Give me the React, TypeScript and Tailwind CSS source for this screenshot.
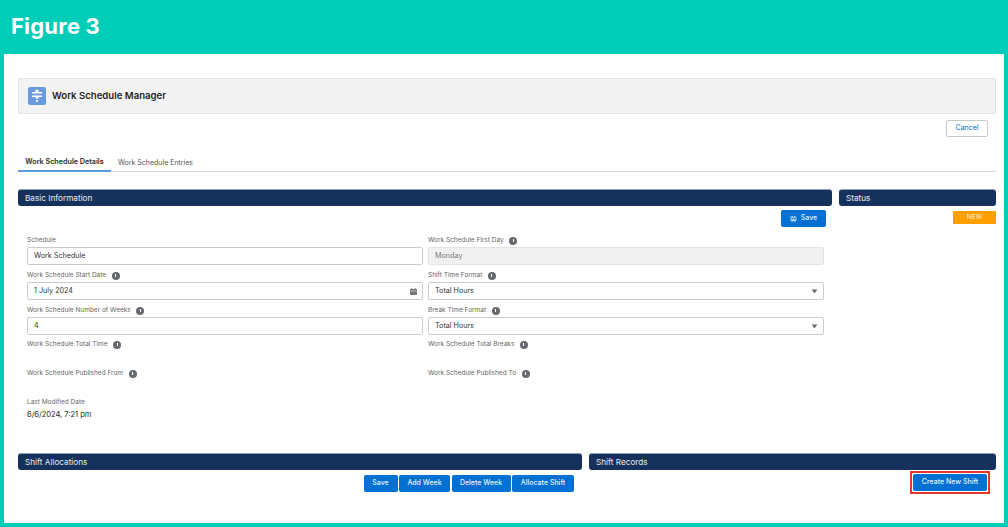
// Figure 3: Work Schedule Manager screen on a teal slide frame
import type { ReactNode } from "react";

function InfoDot() {
  return (
    <span className="ml-[5.5px] inline-flex h-[8px] w-[8px] items-center justify-center rounded-full bg-[#66696e]">
      <span className="h-[3.5px] w-[1px] bg-white" />
    </span>
  );
}

function SectionBar({ title }: { title: string }) {
  return (
    <div className="flex h-[17px] w-full items-center rounded-[3px] border-t border-[#8f9db3] bg-[#16325c] pl-[7px] text-[8.2px] text-[#e6ebf2]">
      {title}
    </div>
  );
}

function Label({ text, info = true }: { text: string; info?: boolean }) {
  return (
    <div className="flex h-[9px] items-center text-[6.5px] leading-[9px] text-[#666666]">
      {text}
      {info && <InfoDot />}
    </div>
  );
}

function Input({ children, right, muted }: { children: ReactNode; right?: ReactNode; muted?: boolean }) {
  return (
    <div
      className={`mt-[2px] flex h-[18px] items-center justify-between rounded-[2px] border pl-[6px] pr-[5px] text-[7.2px] ${
        muted ? "border-[#e3e3e3] bg-[#f1f1f1] text-[#7a7a7a]" : "border-[#cccccc] bg-white text-[#333333]"
      }`}
    >
      <span>{children}</span>
      {right}
    </div>
  );
}

function Caret() {
  return (
    <svg viewBox="0 0 8 6" className="h-[5px] w-[7px] fill-[#706e6b]">
      <path d="M0.5 0.5h7L4 5.5z" />
    </svg>
  );
}

function CalendarIcon() {
  return (
    <svg viewBox="0 0 8 8" className="h-[7px] w-[7px] fill-[#7a7a7a]">
      <path d="M1.5 0h1v1h3V0h1v1H8v2H0V1h1.5zM0 3.6h8V8H0z" />
    </svg>
  );
}

function BlueButton({ children, className = "" }: { children: ReactNode; className?: string }) {
  return (
    <div className={`flex h-[17px] items-center justify-center rounded-[2px] bg-[#0070d2] text-[7px] font-medium text-[#e8f2fb] ${className}`}>
      {children}
    </div>
  );
}

export default function App() {
  return (
    <div className="flex h-[527px] w-[1008px] flex-col overflow-hidden bg-[#00cdb8] font-['Inter',sans-serif]">
      <div className="flex h-[54px] shrink-0 items-center pb-[2px] pl-[11px] text-[22px] font-bold tracking-[0.2px] text-white">
        Figure 3
      </div>

      <div className="mx-[4px] mb-[4px] flex-1 bg-white pl-[14px] pr-[8px] pt-[24px]">
        {/* page header */}
        <div className="flex h-[36px] items-center rounded-[2px] border border-[#e2e2e2] bg-[#f3f3f3] pl-[9px]">
          <svg viewBox="0 0 18 18" className="h-[18px] w-[18px]">
            <rect width="18" height="18" rx="2" fill="#6a9be0" />
            <path d="M4 5h10v1.5H4zM4 8.5h10V10H4zM7.5 2.8h3V5h-3zM7.5 10h3v1.5h-3zM8 13h2v1.8H8z" fill="#ffffff" />
          </svg>
          <span className="ml-[6px] text-[9.6px] font-semibold text-[#1f1f1f]">Work Schedule Manager</span>
        </div>

        <div className="mr-[8px] mt-[6px] flex justify-end">
          <div className="flex h-[17px] w-[42px] items-center justify-center rounded-[2px] border border-[#c9c9c9] text-[7px] text-[#0070d2]">
            Cancel
          </div>
        </div>

        {/* tabs */}
        <div className="mt-[18px] flex h-[17px] items-center border-b border-[#d4d4d4] text-[7px]">
          <div className="-mb-px flex h-[17px] w-[93px] items-center justify-center border-b-2 border-[#5c9bdc] text-[7.2px] font-semibold text-[#2b2b2b]">
            Work Schedule Details
          </div>
          <div className="ml-[7px] text-[#555555]">Work Schedule Entries</div>
        </div>

        <div className="mt-[17px] flex gap-[7px]">
          {/* basic information */}
          <div className="w-[814px]">
            <SectionBar title="Basic Information" />
            <div className="mr-[6px] mt-[4px] flex justify-end">
              <BlueButton className="w-[45px] gap-[4px]">
                <svg viewBox="0 0 10 10" className="h-[7px] w-[7px]" fill="none" stroke="currentColor" strokeWidth="1.2">
                  <path d="M1.5 1.5v7h7v-5l-2-2M3.5 1.5v2.5h3v-2.5M3.5 8.5v-2h3v2" />
                </svg>
                Save
              </BlueButton>
            </div>

            <div className="ml-[9px] mr-[8px] mt-[9px] grid grid-cols-[396px_396px] gap-x-[5px]">
              <div className="flex flex-col">
                <Label text="Schedule" info={false} />
                <Input>Work Schedule</Input>
                <div className="mt-[6px]">
                  <Label text="Work Schedule Start Date" />
                  <Input right={<CalendarIcon />}>1 July 2024</Input>
                </div>
                <div className="mt-[6px]">
                  <Label text="Work Schedule Number of Weeks" />
                  <Input>4</Input>
                </div>
                <div className="mt-[5px]">
                  <Label text="Work Schedule Total Time" />
                </div>
                <div className="mt-[20px]">
                  <Label text="Work Schedule Published From" />
                </div>
                <div className="mt-[20px]">
                  <Label text="Last Modified Date" info={false} />
                  <div className="mt-[3px] text-[7.5px] leading-[10px] text-[#222222]">6/6/2024, 7:21 pm</div>
                </div>
              </div>
              <div className="flex flex-col">
                <Label text="Work Schedule First Day" />
                <Input muted>Monday</Input>
                <div className="mt-[6px]">
                  <Label text="Shift Time Format" />
                  <Input right={<Caret />}>Total Hours</Input>
                </div>
                <div className="mt-[6px]">
                  <Label text="Break Time Format" />
                  <Input right={<Caret />}>Total Hours</Input>
                </div>
                <div className="mt-[5px]">
                  <Label text="Work Schedule Total Breaks" />
                </div>
                <div className="mt-[20px]">
                  <Label text="Work Schedule Published To" />
                </div>
              </div>
            </div>
          </div>

          {/* status */}
          <div className="flex-1">
            <SectionBar title="Status" />
            <div className="mt-[5px] flex justify-end">
              <div className="flex h-[13px] w-[43px] items-center justify-center rounded-[1px] bg-[#ffa000] text-[6.5px] font-medium text-[#ffe9c2]">
                NEW
              </div>
            </div>
          </div>
        </div>

        {/* shift sections */}
        <div className="mt-[33px] flex gap-[7px]">
          <div className="w-[564px]">
            <SectionBar title="Shift Allocations" />
            <div className="mr-[8px] mt-[5px] flex justify-end gap-[1.5px]">
              <BlueButton className="w-[34px]">Save</BlueButton>
              <BlueButton className="w-[51px]">Add Week</BlueButton>
              <BlueButton className="w-[59px]">Delete Week</BlueButton>
              <BlueButton className="w-[62px]">Allocate Shift</BlueButton>
            </div>
          </div>
          <div className="flex-1">
            <SectionBar title="Shift Records" />
            <div className="mr-[6px] mt-[1px] flex justify-end">
              <div className="border-2 border-[#e8352a] p-[1px]">
                <BlueButton className="w-[74px]">Create New Shift</BlueButton>
              </div>
            </div>
          </div>
        </div>
      </div>
    </div>
  );
}
